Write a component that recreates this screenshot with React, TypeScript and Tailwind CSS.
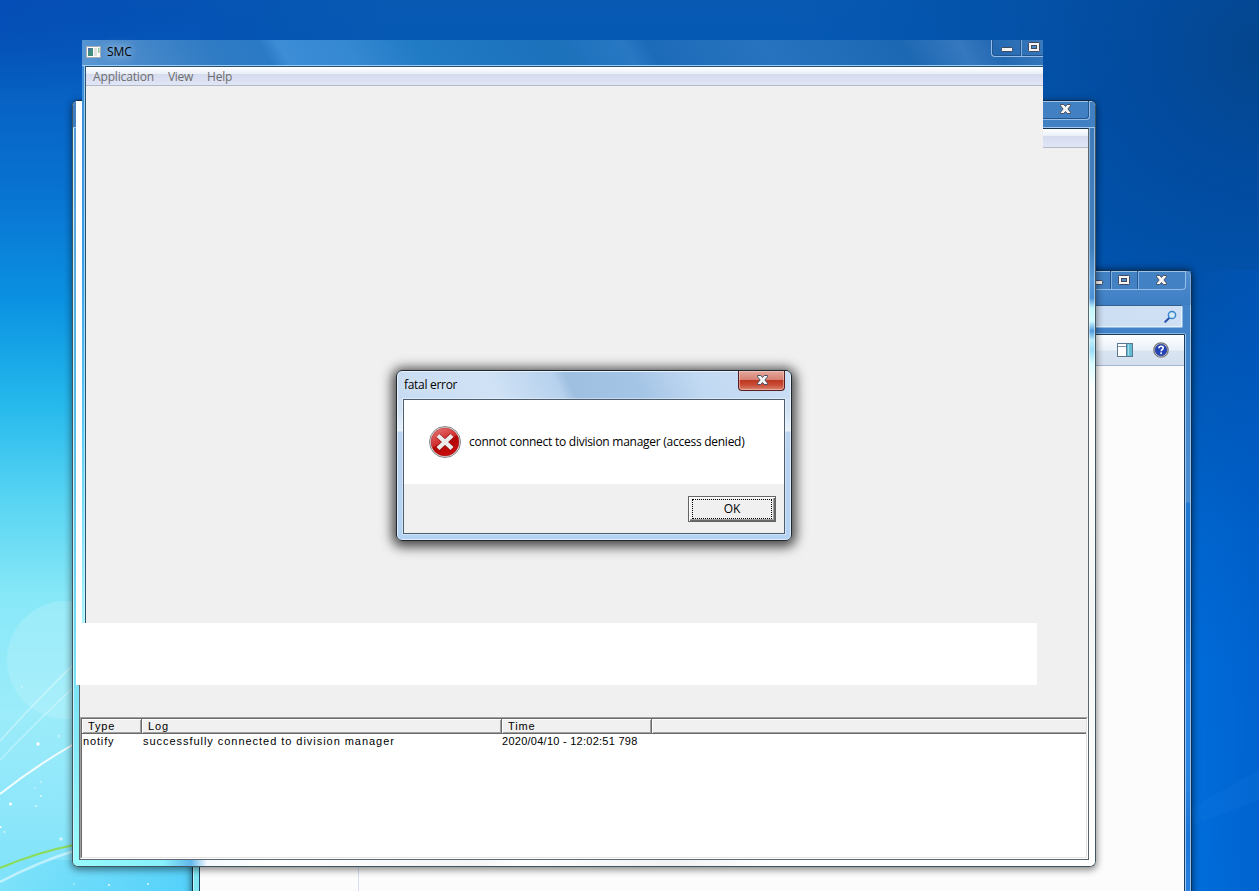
import React from 'react';

const SEGOE = "font-['Open_Sans','Noto_Sans',sans-serif]";

const columns = [
  { name: 'Type', width: 'w-[60px]' },
  { name: 'Log', width: 'w-[360px]' },
  { name: 'Time', width: 'w-[150px]' },
];

const rows = [
  {
    type: 'notify',
    log: 'successfully connected to division manager',
    date: '2020/04/10 - 12:02:51 798',
  },
];

function CloseGlyph() {
  return (
    <svg width="11" height="10" viewBox="0 0 11 10" className="block">
      <path
        d="M0.5 0.5h3.3l1.7 2 1.7-2h3.3v1.3L7.9 5l2.6 3.2v1.3H7.2l-1.7-2-1.7 2H0.5V8.2L3.1 5 0.5 1.8z"
        fill="#f4f4f4"
        stroke="#4b5162"
        strokeWidth="1"
      />
    </svg>
  );
}

function MaxGlyph() {
  return (
    <svg width="12" height="10" viewBox="0 0 12 10" className="block">
      <rect x="0.5" y="0.5" width="11" height="9" rx="0.8" fill="#f4f4f4" stroke="#43495c" />
      <rect x="3.5" y="3.5" width="5" height="3" fill="#4c8cc8" stroke="#43495c" />
    </svg>
  );
}

function MinGlyph() {
  return (
    <svg width="12" height="5" viewBox="0 0 12 5" className="block">
      <rect x="0.5" y="0.5" width="11" height="4" rx="0.8" fill="#f4f4f4" stroke="#43495c" />
    </svg>
  );
}

function Wallpaper() {
  return (
    <svg className="absolute inset-0" width="1259" height="891" viewBox="0 0 1259 891">
      <defs>
        <linearGradient id="base" x1="0" y1="0" x2="0" y2="1">
          <stop offset="0" stopColor="#0759b2" />
          <stop offset="0.25" stopColor="#0058b6" />
          <stop offset="0.5" stopColor="#0060c6" />
          <stop offset="0.75" stopColor="#006cda" />
          <stop offset="1" stopColor="#006edc" />
        </linearGradient>
        <radialGradient id="corner" gradientUnits="userSpaceOnUse" cx="1259" cy="50" r="480">
          <stop offset="0" stopColor="#04458c" />
          <stop offset="0.25" stopColor="#02489a" stopOpacity="0.8" />
          <stop offset="1" stopColor="#0050a8" stopOpacity="0" />
        </radialGradient>
        <linearGradient id="topLeft" x1="0" y1="0" x2="1" y2="0">
          <stop offset="0" stopColor="#044db6" />
          <stop offset="1" stopColor="#044db6" stopOpacity="0" />
        </linearGradient>
        <linearGradient id="left" x1="0" y1="0" x2="0" y2="1">
          <stop offset="0" stopColor="#0552b8" stopOpacity="0" />
          <stop offset="0.11" stopColor="#0762c4" />
          <stop offset="0.22" stopColor="#0874d2" />
          <stop offset="0.34" stopColor="#0b92e2" />
          <stop offset="0.45" stopColor="#24b8ec" />
          <stop offset="0.56" stopColor="#58d4f3" />
          <stop offset="0.67" stopColor="#88e8f8" />
          <stop offset="0.8" stopColor="#9cecfa" />
          <stop offset="0.92" stopColor="#8ce6fa" />
          <stop offset="1" stopColor="#7ce2fa" />
        </linearGradient>
        <linearGradient id="bottomShade" x1="0" y1="0" x2="1" y2="0">
          <stop offset="0" stopColor="#40c8fa" stopOpacity="0" />
          <stop offset="1" stopColor="#40c8fa" stopOpacity="0.7" />
        </linearGradient>
        <linearGradient id="edge" x1="0" y1="0" x2="1" y2="0">
          <stop offset="0" stopColor="#0058c0" stopOpacity="0" />
          <stop offset="1" stopColor="#0056c0" stopOpacity="0.45" />
        </linearGradient>
      </defs>
      <rect width="1259" height="891" fill="url(#base)" />
      <rect width="400" height="300" fill="url(#topLeft)" />
      <rect x="700" width="559" height="891" fill="url(#corner)" />
      <rect width="200" height="891" fill="url(#left)" />
      <rect y="860" width="200" height="31" fill="url(#bottomShade)" />
      <rect x="1191" y="270" width="68" height="621" fill="url(#edge)" />
      <path d="M1191 808L1259 770V800L1191 826z" fill="#1a80e4" opacity="0.15" />
      <circle cx="66" cy="660" r="59" fill="#c4f4fc" opacity="0.3" />
      <g fill="none" stroke="#fff">
        <path d="M0 741Q35 702 74 664" strokeWidth="1.5" opacity="0.4" />
        <path d="M0 760Q35 723 74 687" strokeWidth="1.5" opacity="0.35" />
        <path d="M0 794Q34 767 74 744" strokeWidth="2" opacity="0.9" />
        <path d="M0 882Q38 862 74 851" strokeWidth="2.5" opacity="0.5" />
      </g>
      <path d="M0 868Q38 852 74 845" fill="none" stroke="#8bdc58" strokeWidth="2.2" />
      <g fill="#fff">
        <circle cx="38" cy="744" r="1.7" />
        <circle cx="10.5" cy="804" r="1.5" />
        <circle cx="61" cy="839" r="1.8" opacity="0.6" />
        <circle cx="59" cy="736" r="1.5" opacity="0.35" />
        <circle cx="41" cy="782" r="0.8" opacity="0.8" />
        <circle cx="35" cy="788" r="0.8" opacity="0.7" />
        <circle cx="41" cy="796" r="0.9" opacity="0.8" />
        <circle cx="36" cy="806" r="0.9" opacity="0.8" />
        <circle cx="0.5" cy="827" r="1" />
        <circle cx="4.5" cy="832" r="0.9" opacity="0.7" />
        <circle cx="22" cy="687" r="0.8" opacity="0.6" />
        <circle cx="109" cy="885" r="1.1" opacity="0.8" />
        <circle cx="148" cy="884" r="1" opacity="0.8" />
        <circle cx="74" cy="884" r="0.9" opacity="0.5" />
      </g>
    </svg>
  );
}

function ExplorerWindow() {
  return (
    <div className="absolute left-[192px] top-[270px] flex h-[640px] w-[1000px] flex-col rounded-t-[6px] border border-[#10304f] bg-[#4182c8] shadow-[inset_0_1px_0_#9cc4ea,inset_-1px_0_0_#9cc4ea,0_0_7px_1px_rgba(0,0,0,0.5)]">
      <div className="flex h-[34px] items-start justify-end bg-gradient-to-b from-[#5d97d3]/60 to-[#3777bd]/40 pr-[5px]">
        <div className="flex h-[19px] rounded-b-[4px] border border-t-0 border-[#93bde6] bg-[#4281c3] shadow-[inset_0_1px_0_#9cc4ea]">
          <div className="flex w-[28px] items-center justify-center border-r border-[#24548c] pt-[5px]">
            <MinGlyph />
          </div>
          <div className="flex w-[27px] items-center justify-center border-r border-[#24548c] shadow-[inset_1px_0_0_#7fb0e0]">
            <MaxGlyph />
          </div>
          <div className="flex w-[47px] items-center justify-center shadow-[inset_1px_0_0_#7fb0e0]">
            <CloseGlyph />
          </div>
        </div>
      </div>
      <div className="mr-[8px] ml-[6px] flex h-[23px] items-center justify-end rounded-[2px] border border-[#8db9e4] border-t-[#31618f] bg-gradient-to-r from-[#b8d2ee] to-[#cfe0f4] pr-[5px] shadow-[inset_-1px_-1px_0_#e6f1fb]">
        <svg width="13" height="13" viewBox="0 0 13 13">
          <path d="M5.4 7.8L1.3 11.8" stroke="#2850a8" strokeWidth="2" strokeLinecap="round" />
          <circle cx="8" cy="5" r="3.6" fill="#d6ecfb" stroke="#3a86c8" strokeWidth="1.5" />
        </svg>
      </div>
      <div className="h-[6px]" />
      <div className="flex min-h-0 flex-1">
        <div className="w-[6px] bg-[#7fe6f2] shadow-[inset_1px_0_0_#c0f8fa]" />
        <div className="flex flex-1 flex-col border border-b-0 border-[#1c3e60] bg-[#fcfcfc] shadow-[0_-1px_0_#86b5e2,1px_0_0_#9cc8f0]">
          <div className="flex h-[31px] items-center justify-end gap-5 border-b border-[#a3b7cf] bg-[linear-gradient(#fff,#e9f1fa_15px,#d9e4f1_16px,#d4e0ef)] pr-[15px]">
            <svg width="16" height="14" viewBox="0 0 16 14">
              <rect x="0.5" y="0.5" width="15" height="13" fill="#fff" stroke="#5a7890" />
              <path d="M1 3.5h9" stroke="#8098ac" />
              <rect x="10" y="1" width="5" height="12" fill="#62bdd2" />
              <path d="M9.5 1v12" stroke="#5a7890" />
              <path d="M11.5 1.5v11" stroke="#a4e0ec" />
            </svg>
            <svg width="16" height="16" viewBox="0 0 16 16">
              <circle cx="8" cy="8" r="7.2" fill="#d4d8e0" stroke="#75787f" strokeWidth="1.3" />
              <circle cx="8" cy="8" r="5.8" fill="#2442b8" stroke="#1a2a80" strokeWidth="0.6" />
              <path d="M5.9 6.2Q6 4.2 8.1 4.2T10.2 6.1Q10.2 7.1 9 7.8 8.2 8.3 8.2 9.3" fill="none" stroke="#fff" strokeWidth="1.6" />
              <rect x="7.3" y="10.4" width="1.7" height="1.7" fill="#fff" />
            </svg>
          </div>
          <div className="w-[159px] flex-1 border-r border-[#d4e0f4]" />
        </div>
        <div className="w-[6px] bg-[linear-gradient(#4182c8,#4a8ed4_168px,#2277d4_169px,#1f74d0_270px,#2a86e8_340px,#2a84e4_450px,#1b74d8_500px,#2a84e4)] shadow-[inset_1px_0_0_#9cc8f0,inset_-1px_0_0_#8fc0f0]" />
      </div>
    </div>
  );
}

function LogList() {
  return (
    <div className="h-[142px] border border-[#a0a0a0] border-r-white border-b-white">
      <div className="h-full border border-[#696969] border-r-[#e3e3e3] border-b-[#e3e3e3] bg-white font-['Liberation_Sans',Arial,sans-serif] text-[11px] text-black">
        <div className="flex h-[15px] border-b border-[#696969] bg-[#f0f0f0] shadow-[inset_0_1px_0_#fff,inset_0_-1px_0_#a0a0a0]">
          {columns.map(col => (
            <div
              key={col.name}
              className={`${col.width} border-r border-[#696969] pl-[6px] leading-[15px] tracking-[0.85px] shadow-[inset_1px_1px_0_#fff,inset_-1px_-1px_0_#a0a0a0]`}
            >
              {col.name}
            </div>
          ))}
          <div className="flex-1 shadow-[inset_1px_1px_0_#fff,inset_0_-1px_0_#a0a0a0]" />
        </div>
        {rows.map(row => (
          <div key={row.date} className="flex leading-[15px] whitespace-nowrap">
            <span className="w-[60px] pl-px tracking-[0.85px]">{row.type}</span>
            <span className="w-[360px] pl-px tracking-[0.96px]">{row.log}</span>
            <span className="w-[150px] tracking-[0.26px]">{row.date}</span>
          </div>
        ))}
      </div>
    </div>
  );
}

function MainWindow() {
  return (
    <div className="absolute left-[72px] top-[100px] flex h-[767px] w-[1024px] flex-col overflow-hidden rounded-[6px] border border-[#3f5560] border-t-[#0c2748] bg-white">
      <div className="flex h-[27px] items-start justify-end border-b border-[#a4c8ec] bg-[#4180c2] pr-[5px] shadow-[inset_0_1px_0_#9cc4ea]">
        <div className="flex h-[19px] w-[48px] items-start justify-center rounded-br-[4px] border-r border-b border-[#93bde6] pt-[3px] shadow-[inset_-1px_-1px_0_#24548c]">
          <CloseGlyph />
        </div>
      </div>
      <div className="flex min-h-0 flex-1">
        <div className="w-[6px] bg-gradient-to-b from-[#5a9cdd] via-[#52bdea] via-40% to-[#98fbfc] shadow-[inset_1px_0_0_#c8f4fc]" />
        <div className="flex flex-1 flex-col border border-[#5c666c] border-t-[#173354] bg-[#f0f0f0]">
          <div className="h-[19px] border-b border-[#b4bac8] bg-[linear-gradient(#fff,#e9eef7_7px,#d5dbee_7px,#e1e6f6)]" />
          <div className="flex-1" />
          <LogList />
        </div>
        <div className="w-[6px] bg-[linear-gradient(#3f7cbd,#3f7fc0_120px,#5b9edc_150px,#4a90d8_170px,#c2f6fc_180px,#d2fbff_193px,#4f9be0_203px,#bdeefc_212px,#9adcf8_222px,#d8fcff_235px,#fff_260px,#f4f6f6_480px,#fff)] shadow-[inset_1px_0_0_rgba(255,255,255,0.45),inset_-1px_0_0_rgba(255,255,255,0.45)]" />
      </div>
      <div className="h-[6px] bg-[linear-gradient(90deg,#98fbfc,#86f0fb_90px,#62b8ea_118px,#f4faff_134px,#fff_200px,#f5f5f5_400px,#fff_450px,#f2f2f2_600px,#fff_700px)]" />
    </div>
  );
}

function SmcPane() {
  return (
    <div className="absolute left-[82px] top-[40px] flex h-[583px] w-[961px] flex-col">
      <div className="flex h-[26px] items-start border-b border-[#9ccdf2] bg-[linear-gradient(60deg,#5a97d4_0,#4487c9_60px,#2f7bc4_120px,#2b7ac6_165px,#3c8cd6_180px,#3588d2_240px,#217ac4_300px,#1c71bb_420px,#2878c4_480px,#1c6bb9_500px,#2873bf_600px,#1d68b2_720px,#3578bf_770px,#2369b2_800px,#3a79bd)]">
        <svg width="15" height="12" viewBox="0 0 15 12" className="mt-[6px] ml-1">
          <rect x="0.5" y="0.5" width="14" height="11" fill="#fbfbfb" stroke="#a8adb0" />
          <rect x="2" y="2" width="5" height="8" fill="#438d80" />
          <path d="M2 2h3v3H2z" fill="#4c74a4" />
          <rect x="8" y="2" width="3" height="8" fill="#e0e2e2" />
          <rect x="12" y="2" width="1.5" height="5" fill="#98c8a0" />
        </svg>
        <span className={`${SEGOE} mt-[3px] ml-[6px] text-[12px] leading-[18px] tracking-[-0.1px] text-black [text-shadow:0_0_8px_#ffffffb0,0_0_14px_#ffffff90]`}>
          SMC
        </span>
        <div className="ml-auto flex h-[17px] w-[52px] overflow-hidden rounded-bl-[4px] border-b border-l border-[#93bde6] shadow-[inset_1px_-1px_0_#24548c]">
          <div className="flex w-[29px] shrink-0 items-start justify-center border-r border-[#24548c] pt-[7px] pl-px">
            <MinGlyph />
          </div>
          <div className="w-[31px] shrink-0 pt-[2px] pl-[7px] shadow-[inset_1px_0_0_#7fb0e0]">
            <MaxGlyph />
          </div>
        </div>
      </div>
      <div className="flex min-h-0 flex-1">
        <div className="w-[3px] bg-[linear-gradient(#3f8dd6,#3ca0e6_200px,#60d0f4_380px,#a8f4fa)] shadow-[inset_-1px_0_0_rgba(220,250,255,0.6)]" />
        <div className="flex flex-1 flex-col border-t border-l border-[#2a5070] bg-[#f0f0f0]">
          <div className={`${SEGOE} flex h-[19px] gap-[14px] border-b border-[#b4bac8] bg-[linear-gradient(#fff,#e9eef7_7px,#d5dbee_7px,#e1e6f6)] pl-[7px] text-[12px] leading-[19px] text-[#6d6d6d]`}>
            <span className="w-[61px] tracking-[-0.15px]">Application</span>
            <span className="w-[25px] tracking-[-0.3px]">View</span>
            <span className="tracking-[-0.2px]">Help</span>
          </div>
        </div>
      </div>
    </div>
  );
}

function ErrorDialog() {
  return (
    <div className={`${SEGOE} absolute left-[396px] top-[370px] flex h-[171px] w-[396px] flex-col rounded-[6px] border border-[#1c2730] bg-[linear-gradient(#c9ddf3,#d2e3f5_40px,#e8f1fb_60px,#b9d3f0_61px,#b4d2f2)] px-[6px] pb-[6px] text-[12px] text-black shadow-[inset_0_0_0_1px_rgba(255,255,255,0.6),0_2px_12px_4px_rgba(0,0,0,0.7)]`}>
      <div className="-mx-[5px] mt-px flex h-[27px] items-start justify-between rounded-t-[4px] bg-[linear-gradient(65deg,#c6dbf2_0,#d0e2f5_90px,#b7d2ee_150px,#9ebfe0_162px,#a5c5e6_225px,#c1d9f2_280px,#cadef4)] pr-[5px] pl-[6px]">
        <span className="mt-[4px] leading-[18px] tracking-[-0.3px] [text-shadow:0_0_8px_#fff]">fatal error</span>
        <button className="-mt-px flex h-[20px] w-[47px] items-start justify-center rounded-b-[4px] border border-t-0 border-[#561f1f] bg-[linear-gradient(#e5a89c,#d58071_9px,#bd3522_9px,#c94c35_14px,#d98674)] pt-1 pl-px shadow-[inset_0_0_0_1px_rgba(255,220,210,0.45)]">
          <CloseGlyph />
        </button>
      </div>
      <div className="flex flex-1 flex-col border border-[#4e5d6e] shadow-[0_0_0_1px_rgba(255,255,255,0.4)]">
        <div className="flex h-[84px] items-center bg-white pl-[25px]">
          <svg width="32" height="32" viewBox="0 0 32 32">
            <defs>
              <linearGradient id="red" x1="0.2" y1="0" x2="0.7" y2="1">
                <stop offset="0" stopColor="#e87070" />
                <stop offset="0.48" stopColor="#cf2e2e" />
                <stop offset="0.52" stopColor="#b00505" />
                <stop offset="1" stopColor="#cc1010" />
              </linearGradient>
            </defs>
            <circle cx="16" cy="16" r="15.5" fill="#e8e8e8" stroke="#858585" />
            <circle cx="16" cy="16" r="14" fill="url(#red)" stroke="#a42424" strokeWidth="0.5" />
            <path d="M9 9.5l14 13M23 9.5l-14 13" stroke="#941212" strokeWidth="5.4" />
            <path d="M9 9.5l14 13M23 9.5l-14 13" stroke="#ececec" strokeWidth="4.4" />
          </svg>
          <span className="ml-2 tracking-[-0.26px] whitespace-nowrap">
            connot connect to division manager (access denied)
          </span>
        </div>
        <div className="flex flex-1 items-start justify-end bg-[#f0f0f0] pt-3 pr-2">
          <button className="h-[26px] w-[88px] border border-[#646464] shadow-[inset_1px_1px_0_#fff,inset_-1px_-1px_0_#696969,inset_-2px_-2px_0_#a0a0a0]">
            <div className="mx-[3px] h-[20px] border border-dotted border-black leading-[18px]">OK</div>
          </button>
        </div>
      </div>
    </div>
  );
}

export default function App() {
  return (
    <div className="relative h-[891px] w-[1259px] overflow-hidden bg-[#0759b3]">
      <Wallpaper />
      <ExplorerWindow />
      {/* shadow sits on its own layer since the window clips its corners */}
      <div className="absolute left-[72px] top-[100px] h-[767px] w-[1024px] rounded-[6px] shadow-[0_2px_7px_1px_rgba(0,0,0,0.45)]" />
      <MainWindow />
      <div className="absolute left-[76px] top-[101px] h-[522px] w-[6px] bg-white" />
      <SmcPane />
      <div className="absolute left-[76px] top-[623px] h-[62px] w-[961px] bg-white" />
      <ErrorDialog />
    </div>
  );
}
